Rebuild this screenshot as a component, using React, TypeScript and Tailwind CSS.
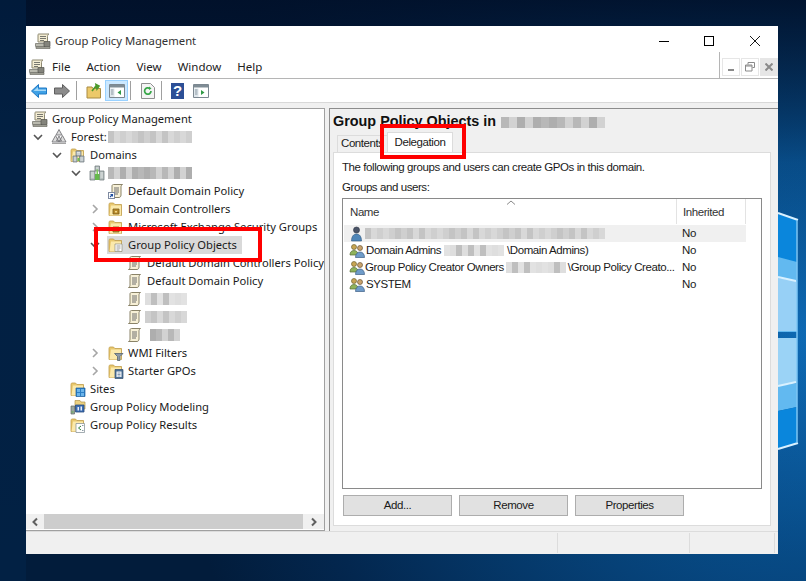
import type { ReactNode } from "react";

const GRAYS = ["#d2d2d2", "#c4c4c4", "#dedede", "#b8b8b8", "#cfcfcf", "#e2e2e2", "#aeaeae", "#d8d8d8", "#bfbfbf"];

function Smudge({ cells, h = 12, size = 6, start = 0 }: { cells: number; h?: number; size?: number; start?: number }) {
  return (
    <div className="flex shrink-0 blur-[0.5px]">
      {Array.from({ length: cells }).map((_, i) => (
        <div key={i} style={{ width: size, height: h, backgroundColor: GRAYS[(i * 5 + start + (i % 3)) % GRAYS.length] }} />
      ))}
    </div>
  );
}

function Icon({ children, className = "" }: { children: ReactNode; className?: string }) {
  return (
    <svg viewBox="0 0 16 16" className={`h-4 w-4 shrink-0 ${className}`}>
      {children}
    </svg>
  );
}

function ScrollShape({ x = 0 }: { x?: number }) {
  return (
    <g transform={`translate(${x} 0)`}>
      <path d="M4.5 1.5h9c-1 .6-1.5 1.4-1.5 2.5v8c0 1.4-.8 2.5-2 2.5H1.5c1-.5 1.5-1.2 1.5-2.5V3c0-.9.6-1.5 1.5-1.5z" fill="#f7f0d6" stroke="#8a8368" />
      <path d="M5 5h5M5 7h5M5 9h5M5 11h4" stroke="#6f6f6f" />
    </g>
  );
}

const ScrollIcon = () => (
  <Icon>
    <ScrollShape />
  </Icon>
);

const GpmIcon = () => (
  <Icon>
    <path d="M3.5 1h10.5c-1 .6-1.5 1.3-1.5 2.3V9H3V2c0-.6.2-1 .5-1z" fill="#f4edd3" stroke="#8d8871" />
    <path d="M5 3.5h6M5 5.5h6M5 7.5h4" stroke="#77776f" />
    <path d="M.5 10.5h9.500v3h-9.500zM1 14h14v1.500H1z" fill="#b9b9ae" stroke="#6a6a62" strokeWidth=".7" />
    <path d="M9 8.500h6v5H9z" fill="#84847c" stroke="#55554f" strokeWidth=".7" />
  </Icon>
);

const ForestIcon = () => (
  <Icon>
    <path d="M8 .5 11 6H5zM4.500 6.500 8 13H1zM11.500 6.500 15 13H8zM8 7l2.500 5h-5z" fill="#dcdcdc" stroke="#77777a" strokeWidth=".9" />
    <path d="M1 14.500h14" stroke="#a5a5a5" />
  </Icon>
);

const FolderBase = () => (
  <>
    <path d="M1 3.500c0-1 .5-1.500 1.200-1.500h3.300l1.300 1.500h6.700v11H1z" fill="#e9c96f" stroke="#bf9c4a" strokeWidth=".8" />
    <path d="M3 4.500h10v10H1.500z" fill="#fbe9ab" />
  </>
);

const FolderIcon = ({ children }: { children?: ReactNode }) => (
  <Icon>
    <FolderBase />
    {children}
  </Icon>
);

const Servers = () => (
  <>
    <path d="M6 4h5v5H6zM3 9h4v6H3zM9.500 9H14v6H9.500z" fill="#b7c0c4" stroke="#6a7378" strokeWidth=".7" />
    <path d="M7 5.500h3M7 7h3M4 11h2M4 13h2M10.500 11h2.500M10.500 13h2.500" stroke="#f0f0f0" strokeWidth=".7" />
    <path d="M7.500 11h2v3h-2z" fill="#6fbf50" />
  </>
);

const DomainIcon = () => (
  <Icon>
    <path d="M6 1h4.500v5H6zM1 6h5v9H1zM10.500 6H15v9h-4.500z" fill="#b7c0bf" stroke="#657074" strokeWidth=".7" />
    <path d="M2 8h3M2 10h3M2 12h3M11.500 8h2.500M11.500 10h2.500M11.500 12h2.500M7 3h2.500" stroke="#eef0f0" strokeWidth=".8" />
    <path d="M6 9h4.500v6H6z" fill="#65b84c" />
    <path d="M7.500 4.500h1.500v4.500H7.500z" fill="#7ecb60" />
  </Icon>
);

const ShortcutScroll = () => (
  <Icon>
    <ScrollShape x={1} />
    <rect x="0.500" y="9.500" width="6" height="6" fill="#fff" stroke="#7f8aa0" />
    <path d="M2 14l2.500-2.500M2.500 11.500H4.500V13.500" stroke="#1f4fa0" fill="none" strokeWidth="1.100" />
  </Icon>
);

const FolderDoc = () => (
  <FolderIcon>
    <path d="M7 7h7v7.500H7z" fill="#fff" stroke="#8e8e80" strokeWidth=".7" />
    <path d="M8.500 9h4M8.500 11h4M8.500 13h3" stroke="#7f7f7f" strokeWidth=".8" />
  </FolderIcon>
);

const FolderBox = () => (
  <FolderIcon>
    <path d="M5 8h6v5H5z" fill="#b78a2c" stroke="#7b5a18" strokeWidth=".8" />
    <path d="M7 10h2v1.500H7z" fill="#f2d98a" />
  </FolderIcon>
);

const FolderFilter = () => (
  <FolderIcon>
    <path d="M6.500 8.500h8.500l-3 3v4h-2.500v-4z" fill="#8d9aa8" stroke="#566470" strokeWidth=".8" />
  </FolderIcon>
);

const FolderList = () => (
  <FolderIcon>
    <path d="M7 6.500h8v9H7z" fill="#4a6f96" stroke="#344f6c" strokeWidth=".7" />
    <path d="M8.500 8.500h5v5.500h-5z" fill="#fff" />
    <path d="M9.500 10h3M9.500 11.500h3M9.500 13h3" stroke="#54708f" strokeWidth=".7" />
  </FolderIcon>
);

const SitesIcon = () => (
  <FolderIcon>
    <path d="M6 7h9v8.500H6z" fill="#2c7fc6" stroke="#1c5f9c" strokeWidth=".7" />
    <path d="M7 8h3v3H7zM11 8h3v3h-3zM7 12h3v3H7zM11 12h3v3h-3z" fill="#6bb4ea" />
  </FolderIcon>
);

const ModelingIcon = () => (
  <Icon>
    <path d="M5 1.500h5l1 1.500h4v7H5z" fill="#ecd180" stroke="#b3964c" strokeWidth=".7" />
    <path d="M1 7h3.500v8H1z" fill="#9aa7a0" stroke="#626b66" strokeWidth=".7" />
    <path d="M5.500 6h8.500v7H5.500z" fill="#3c6eb4" stroke="#27497c" strokeWidth=".8" />
    <path d="M7.500 8h1.500v3.500H7.500zM10.500 7.500H12v4h-1.500z" fill="#e9eef5" />
    <path d="M1.500 13h2" stroke="#5fb04c" />
  </Icon>
);

const ResultsIcon = () => (
  <FolderIcon>
    <path d="M6 6.500h8.500v9H6z" fill="#fff" stroke="#7d8a90" strokeWidth=".7" />
    <path d="M11 9 8.500 11l2.500 2" stroke="#2f7f3f" fill="none" />
    <path d="M12 8.500h1.500M12 13.500h1.500" stroke="#8b99a5" />
  </FolderIcon>
);

const GroupIcon = () => (
  <svg viewBox="0 0 16 16" className="h-4 w-4 shrink-0">
    <circle cx="5" cy="4" r="2.500" fill="#c8a552" stroke="#6f6334" strokeWidth=".7" />
    <path d="M1 12c0-3 1.500-4.500 4-4.500S9 9 9 12z" fill="#8fb35c" stroke="#556c35" strokeWidth=".7" />
    <circle cx="11" cy="5" r="2.500" fill="#c9a36c" stroke="#6b5636" strokeWidth=".7" />
    <path d="M6.500 14.500c0-3.500 1.800-5.500 4.500-5.500s4.500 2 4.500 5.500z" fill="#6f9cc9" stroke="#3d5f85" strokeWidth=".7" />
  </svg>
);

const UserIcon = () => (
  <svg viewBox="0 0 16 16" className="h-4 w-4 shrink-0">
    <circle cx="7.500" cy="4" r="3" fill="#4a5468" stroke="#2f3644" strokeWidth=".6" />
    <path d="M2.500 15c0-4.500 2-7 5-7s5 2.500 5 7z" fill="#4f86b8" stroke="#2e567c" strokeWidth=".6" />
  </svg>
);

function Chevron({ open, dim }: { open?: boolean; dim?: boolean }) {
  return (
    <svg viewBox="0 0 10 10" className="h-[10px] w-[10px] shrink-0">
      <path
        d={open ? "M1 3l4 4 4-4" : "M3 1l4 4-4 4"}
        fill="none"
        stroke={dim ? "#a6a6a6" : "#555555"}
        strokeWidth="1.600"
      />
    </svg>
  );
}

const INDENT = ["w-0", "w-0", "w-[19px]", "w-[38px]", "w-[57px]", "w-[76px]"];

function TreeRow({
  level,
  icon,
  chevron,
  selected,
  children,
}: {
  level: number;
  icon: ReactNode;
  chevron?: "open" | "closed";
  selected?: boolean;
  children: ReactNode;
}) {
  return (
    <div className="flex h-[18px] items-center whitespace-nowrap">
      <div className={`shrink-0 ${INDENT[level]}`} />
      {level > 0 && (
        <div className="flex w-[19px] shrink-0 pl-[1px]">
          {chevron && <Chevron open={chevron === "open"} dim={chevron === "closed"} />}
        </div>
      )}
      <div className={`flex h-[18px] items-center ${selected ? "-ml-[1px] bg-[#d9d9d9] pr-[5px] pl-[1px]" : ""}`}>
        <div className="flex w-[20px] shrink-0">{icon}</div>
        <div className="flex items-center gap-[1px]">{children}</div>
      </div>
    </div>
  );
}

function Tree() {
  return (
    <div className="flex min-h-0 flex-1 flex-col overflow-hidden pt-[1px] pl-[6px] font-['Noto_Sans',sans-serif] text-[11.2px] text-[#1a1a1a]">
      <TreeRow level={0} icon={<GpmIcon />}>Group Policy Management</TreeRow>
      <TreeRow level={1} icon={<ForestIcon />} chevron="open">
        <span>Forest:</span>
        <Smudge cells={14} size={6} start={1} />
      </TreeRow>
      <TreeRow level={2} icon={<FolderIcon><Servers /></FolderIcon>} chevron="open">Domains</TreeRow>
      <TreeRow level={3} icon={<DomainIcon />} chevron="open">
        <div className="-ml-[1px]"><Smudge cells={14} size={6} start={3} /></div>
      </TreeRow>
      <TreeRow level={4} icon={<ShortcutScroll />}>Default Domain Policy</TreeRow>
      <TreeRow level={4} icon={<FolderBox />} chevron="closed">Domain Controllers</TreeRow>
      <TreeRow level={4} icon={<FolderBox />} chevron="closed">Microsoft Exchange Security Groups</TreeRow>
      <TreeRow level={4} icon={<FolderDoc />} chevron="open" selected>Group Policy Objects</TreeRow>
      <TreeRow level={5} icon={<ScrollIcon />}>Default Domain Controllers Policy</TreeRow>
      <TreeRow level={5} icon={<ScrollIcon />}>Default Domain Policy</TreeRow>
      <TreeRow level={5} icon={<ScrollIcon />}>
        <div className="-ml-[2px]"><Smudge cells={7} size={6} start={2} /></div>
      </TreeRow>
      <TreeRow level={5} icon={<ScrollIcon />}>
        <div className="-ml-[2px]"><Smudge cells={7} size={6} start={4} /></div>
      </TreeRow>
      <TreeRow level={5} icon={<ScrollIcon />}>
        <div className="pl-[3px]">
          <Smudge cells={5} size={6} start={6} />
        </div>
      </TreeRow>
      <TreeRow level={4} icon={<FolderFilter />} chevron="closed">WMI Filters</TreeRow>
      <TreeRow level={4} icon={<FolderList />} chevron="closed">Starter GPOs</TreeRow>
      <TreeRow level={2} icon={<SitesIcon />}>Sites</TreeRow>
      <TreeRow level={2} icon={<ModelingIcon />}>Group Policy Modeling</TreeRow>
      <TreeRow level={2} icon={<ResultsIcon />}>Group Policy Results</TreeRow>
    </div>
  );
}

function ConsoleIcon({ side }: { side: "left" | "right" }) {
  return (
    <svg viewBox="0 0 16 14" className="h-[14px] w-4">
      <path d="M.5.500h15v13H.500z" fill="#fff" stroke="#7b8790" />
      <path d="M1 1h14v2.500H1z" fill="#7f8c95" />
      <path d="M1 4.500h4.500v8.500H1z" fill="#dfe7ec" />
      <path d="M2 6h2.500M2 8h2.500M2 10h2.500" stroke="#8b98a2" />
      {side === "left" ? (
        <path d="M12 6v5L8.500 8.500z" fill="#2f9a45" />
      ) : (
        <path d="M8 6v5l3.500-2.500z" fill="#2f9a45" />
      )}
    </svg>
  );
}

function Toolbar() {
  return (
    <div className="flex h-[23px] items-center bg-white pl-[5px]">
      <svg viewBox="0 0 16 14" className="h-[14px] w-4">
        <path d="M7.500 .5.500 7l7 6.500V10H15.500V4H7.500z" fill="#3fa1e6" stroke="#1f78c4" />
        <path d="M2.500 7 7 3v2.500h8V7z" fill="#a5d8f7" />
      </svg>
      <svg viewBox="0 0 16 14" className="ml-[7px] h-[14px] w-4">
        <path d="M8.500 .5l7 6.500-7 6.500V10H.500V4h8z" fill="#8b8b8b" stroke="#5e5e5e" />
      </svg>
      <div className="mr-[9px] ml-[6px] h-[19px] w-px bg-[#a0a0a0]" />
      <svg viewBox="0 0 16 16" className="h-4 w-4">
        <path d="M1 4h5l1 1.500h7.500V15H1z" fill="#ecc96a" stroke="#a98b42" />
        <path d="M6 8 10 3M10 1.500l3 1.500-2 3z" stroke="#4b9a2c" strokeWidth="1.600" fill="#5fae3a" />
      </svg>
      <div className="ml-[3px] flex h-[21px] w-[23px] items-center justify-center border border-[#99d1ff] bg-[#cce8ff]">
        <ConsoleIcon side="left" />
      </div>
      <div className="mr-[10px] ml-[2px] h-[19px] w-px bg-[#a0a0a0]" />
      <svg viewBox="0 0 14 16" className="h-4 w-[14px]">
        <path d="M.5.500h9l4 4v11H.500z" fill="#f4f4f4" stroke="#8f8f8f" />
        <path d="M10 8a3.200 3.200 0 1 1-1.200-2.500" fill="none" stroke="#38a648" strokeWidth="1.700" />
        <path d="M8 3.500l2.500 2-2.500 1.500z" fill="#38a648" />
      </svg>
      <div className="mr-[9px] ml-[6px] h-[19px] w-px bg-[#a0a0a0]" />
      <div className="flex h-4 w-[13px] items-center justify-center bg-[#2c4f96] font-['Liberation_Sans',sans-serif] text-[15px] leading-4 font-bold text-white">
        ?
      </div>
      <div className="ml-[9px]">
        <ConsoleIcon side="right" />
      </div>
    </div>
  );
}

function Scrollbar() {
  return (
    <div className="flex h-[15px] shrink-0 items-center bg-[#f0f0f0]">
      <div className="flex w-[18px] justify-center">
        <svg viewBox="0 0 10 10" className="h-[10px] w-[10px]">
          <path d="M7 1.500 3.500 5 7 8.500" fill="none" stroke="#606060" strokeWidth="2" />
        </svg>
      </div>
      <div className="h-[15px] flex-1 bg-[#cdcdcd]" />
      <div className="flex w-[21px] justify-center">
        <svg viewBox="0 0 10 10" className="h-[10px] w-[10px]">
          <path d="M3 1.500 6.500 5 3 8.500" fill="none" stroke="#606060" strokeWidth="2" />
        </svg>
      </div>
    </div>
  );
}

function ListRow({ icon, children, shaded }: { icon: ReactNode; children: ReactNode; shaded?: boolean }) {
  return (
    <div className={`flex h-[17px] w-[402px] items-center whitespace-nowrap ${shaded ? "bg-[#f0f0f0]" : ""}`}>
      <div className="flex w-[334px] items-center overflow-hidden pl-[5px]">
        {icon}
        <div className="flex items-center">{children}</div>
      </div>
      <div className="pl-[4px]">No</div>
    </div>
  );
}

function Delegation() {
  return (
    <div className="flex min-h-0 flex-1 flex-col border border-[#dcdcdc] bg-white px-[8px] pb-[8px] font-['Liberation_Sans',sans-serif] text-[11.5px] tracking-[-0.42px] text-[#1a1a1a]">
      <div className="mt-[7px] h-[14px] leading-[14px]">The following groups and users can create GPOs in this domain.</div>
      <div className="mt-[6px] h-[14px] leading-[14px]">Groups and users:</div>
      <div className="mt-[4px] flex h-[291px] flex-col border border-[#8a8a8a] bg-white pl-[1px]">
        <div className="relative flex h-[26px] w-[402px] items-start">
          <div className="h-[25px] w-[333px] border-r border-[#e3e3e3] pt-[5px] pl-[6px] text-[#333333]">Name</div>
          <div className="h-[25px] w-[69px] border-r border-[#e3e3e3] pt-[5px] pl-[6px] text-[#333333]">Inherited</div>
          <svg viewBox="0 0 10 5" className="absolute top-px left-[162px] h-[5px] w-[10px]">
            <path d="M1 4.500 5 1l4 3.500" fill="none" stroke="#8a8a8a" />
          </svg>
        </div>
        <ListRow icon={<UserIcon />} shaded>
          <Smudge cells={40} size={6} h={11} start={1} />
        </ListRow>
        <ListRow icon={<GroupIcon />}>
          <span className="pl-[1px]">Domain Admins</span>
          <span className="px-[3px]"><Smudge cells={10} size={6} h={11} start={5} /></span>
          <span>\Domain Admins)</span>
        </ListRow>
        <ListRow icon={<GroupIcon />}>
          <span>Group Policy Creator Owners</span>
          <span className="px-[2px]"><Smudge cells={10} size={6} h={11} start={2} /></span>
          <span>\Group Policy Creato...</span>
        </ListRow>
        <ListRow icon={<GroupIcon />}>
          <span className="pl-[1px]">SYSTEM</span>
        </ListRow>
      </div>
      <div className="mt-[6px] flex gap-[7px] pl-[1px]">
        {["Add...", "Remove", "Properties"].map((label) => (
          <div
            key={label}
            className="flex h-[21px] w-[109px] items-center justify-center border border-[#adadad] bg-[#e1e1e1] text-[#1a1a1a]"
          >
            {label}
          </div>
        ))}
      </div>
    </div>
  );
}

function Wallpaper() {
  return (
    <svg viewBox="0 0 806 581" className="absolute inset-0 h-full w-full">
      <defs>
        <radialGradient id="glow" gradientUnits="userSpaceOnUse" cx="806" cy="335" r="640">
          <stop offset="0" stopColor="#0f6fbc" />
          <stop offset="0.35" stopColor="#074a85" />
          <stop offset="0.8" stopColor="#03274f" />
          <stop offset="1" stopColor="#021c3b" />
        </radialGradient>
        <linearGradient id="shade" x1="0" y1="0" x2="0" y2="1">
          <stop offset="0" stopColor="#011029" stopOpacity="0.9" />
          <stop offset="0.28" stopColor="#011029" stopOpacity="0.1" />
          <stop offset="1" stopColor="#011029" stopOpacity="0" />
        </linearGradient>
      </defs>
      <rect width="806" height="581" fill="url(#glow)" />
      <rect width="806" height="581" fill="url(#shade)" />
      <path d="M0 0h26v581H0z" fill="#02274f" opacity="0.45" />
      <path d="M778 214 797 220 796 332H778z" fill="#0a86dc" />
      <path d="M778 257 797 262V332H778z" fill="#62b9f0" />
      <path d="M778 278 797 281V331H778z" fill="#97d0f6" />
      <path d="M778 338H797V383L778 386z" fill="#9bd3f6" />
      <path d="M778 386 797 383V407L778 411z" fill="#62b9f0" />
      <path d="M778 411 797 407V443L778 449z" fill="#0a86dc" />
      <path d="M778 213 798 220M778 277 796 281M778 386 796 382M778 449 798 443" stroke="#d9f1ff" strokeWidth="2" />
      <path d="M797 220V443" stroke="#7cc6f5" strokeWidth="1.500" />
    </svg>
  );
}

export default function App() {
  return (
    <div className="relative h-[581px] w-[806px] overflow-hidden pt-[26px] pl-[26px]">
      <Wallpaper />
      <div className="relative flex h-[528px] w-[752px] flex-col bg-white font-['Noto_Sans',sans-serif] text-[11.5px] text-[#1a1a1a]">
        {/* title bar */}
        <div className="flex h-[26px] shrink-0 items-center pt-[4px] pl-[9px]">
          <GpmIcon />
          <div className="ml-[4px] text-[11.3px] text-[#333333]">Group Policy Management</div>
          <div className="ml-auto flex items-center pr-[18px]">
            <div className="h-px w-[10px] bg-black" />
            <div className="ml-[35px] h-[10px] w-[10px] border border-black" />
            <svg viewBox="0 0 10 10" className="ml-[36px] h-[10px] w-[10px]">
              <path d="M0 0l10 10M10 0 0 10" stroke="#000" strokeWidth=".9" />
            </svg>
          </div>
        </div>
        {/* menu bar */}
        <div className="flex h-[27px] shrink-0 items-end">
          <div className="flex h-[27px] flex-1 items-center border-r border-b border-[#b5b5b5] pt-[4px] pl-[3px] text-[11.5px] text-[#222222]">
            <GpmIcon />
            <div className="ml-[7px] flex gap-[16px]">
              <span>File</span>
              <span>Action</span>
              <span>View</span>
              <span>Window</span>
              <span>Help</span>
            </div>
          </div>
          <div className="flex h-[27px] w-[58px] items-center gap-px border-b border-[#b5b5b5] pt-[4px] pl-[2px]">
            <div className="flex h-[18px] w-[18px] items-end justify-center border border-[#e6e6e6] pb-[4px]">
              <div className="h-[2px] w-[6px] bg-[#8a8a8a]" />
            </div>
            <div className="flex h-[18px] w-[18px] items-center justify-center border border-[#e6e6e6]">
              <svg viewBox="0 0 10 10" className="h-[10px] w-[10px]">
                <path d="M3 2.500V.5h6.500v5H7.500M.5 3h6.500v6H.5zM.5 4h6.500" fill="none" stroke="#8a8a8a" />
              </svg>
            </div>
            <div className="flex h-[18px] w-[18px] items-center justify-center bg-[#e6e6e6]">
              <svg viewBox="0 0 8 8" className="h-2 w-2">
                <path d="M.5.500l7 7M7.500.5l-7 7" stroke="#8a8a8a" strokeWidth="2" />
              </svg>
            </div>
          </div>
        </div>
        <Toolbar />
        <div className="h-[6px] shrink-0 border-t border-[#d8d8d8] bg-[#f0f0f0]" />
        {/* panes */}
        <div className="flex min-h-0 flex-1 bg-[#f0f0f0]">
          <div className="flex w-[299px] shrink-0 flex-col border-t border-r border-b border-[#a0a0a0] bg-white">
            <Tree />
            <Scrollbar />
            <div className="h-px bg-white" />
          </div>
          <div className="w-[4px] shrink-0" />
          <div className="flex min-w-0 flex-1 flex-col border-t border-l border-[#8c8c8c] pr-[7px] pl-[3px]">
            <div className="flex h-[26px] shrink-0 items-center font-['Liberation_Sans',sans-serif] text-[14.4px] font-bold text-[#111111]">
              <span>Group Policy Objects in</span>
              <span className="pl-[5px]"><Smudge cells={13} size={8} h={11} start={3} /></span>
            </div>
            <div className="flex h-[17px] shrink-0 items-end pl-[4px] font-['Liberation_Sans',sans-serif] text-[11.5px] tracking-[-0.42px]">
              <div className="flex h-[17px] w-[50px] items-center border-t border-l border-[#dcdcdc] pl-[3px]">Contents</div>
              <div className="-mb-px flex h-[21px] w-[66px] items-center justify-center border-x border-t border-[#dcdcdc] bg-white">
                Delegation
              </div>
            </div>
            <Delegation />
            <div className="h-[5px] shrink-0" />
          </div>
        </div>
        {/* status bar */}
        <div className="flex h-[23px] shrink-0 items-stretch border-t border-[#dcdcdc] bg-[#f0f0f0] py-[1px]">
          <div className="w-[532px] border-r border-[#dcdcdc]" />
          <div className="w-[132px] border-r border-[#dcdcdc]" />
          <div className="w-[85px] border-r border-[#dcdcdc]" />
        </div>
        {/* red call-outs */}
        <div className="absolute top-[201px] left-[68px] h-[35px] w-[168px] border-[4px] border-[#ff0000]" />
        <div className="absolute top-[98px] left-[354px] h-[35px] w-[86px] border-[4px] border-[#ff0000]" />
      </div>
    </div>
  );
}
